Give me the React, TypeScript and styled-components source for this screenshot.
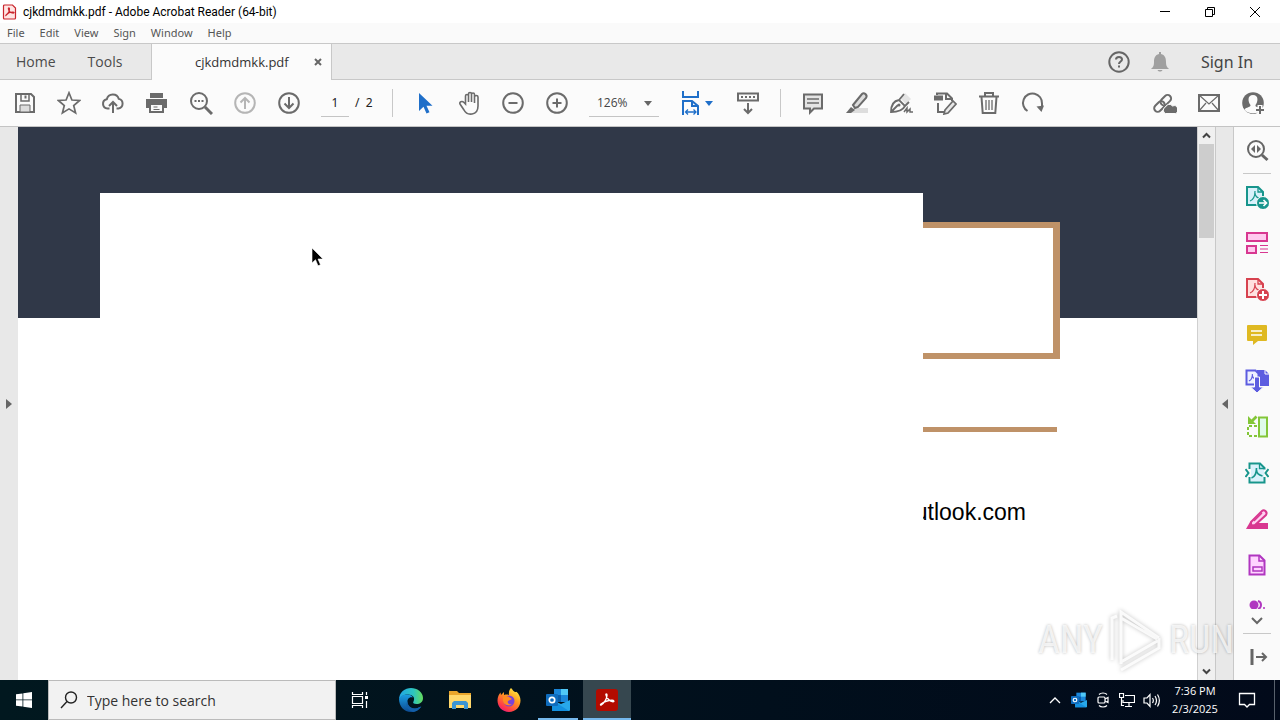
import React from 'react';
import styled, { createGlobalStyle } from 'styled-components';

const GlobalStyle = createGlobalStyle`
  * { box-sizing: border-box; }
  body { margin: 0; background: #fff; font-family: "Open Sans", "Noto Sans", sans-serif; }
  button, input, select { font: inherit; color: inherit; border: 0; background: none; padding: 0; margin: 0; outline: none; }
  svg { display: block; flex: none; }
`;

const Desktop = styled.div`
  display: flex;
  flex-direction: column;
  height: 100vh;
  overflow: hidden;
`;

/* Window chrome */
const TitleBar = styled.header`
  display: flex;
  align-items: center;
  height: 23px;
  padding: 0 3px 0 2px;
  background: #fff;
  color: #000;
`;
const WindowTitle = styled.h1`
  flex: 1;
  margin: 0 0 0 5px;
  font: 400 12px/16px Roboto, sans-serif;
`;
const CaptionButton = styled.button`
  display: flex;
  align-items: center;
  justify-content: center;
  width: 45px;
  height: 22px;
`;
const MenuBar = styled.nav`
  display: flex;
  gap: 15px;
  height: 20px;
  padding: 0 7px;
  background: #fafafa;
  color: #555;
  font: 11px/20px "Noto Sans", sans-serif;
`;
const MenuItem = styled.button`
  line-height: 20px;
`;
const TabBar = styled.div`
  display: flex;
  align-items: stretch;
  height: 37px;
  border-top: 1px solid #c8c8c8;
  border-bottom: 1px solid #c8c8c8;
  background: #e9e9e9;
  color: #4b4b4b;
  font-size: 14px;
`;
const NavTabs = styled.nav`
  display: flex;
  gap: 32px;
  width: 151px;
  padding-left: 16px;
`;
const NavTab = styled.button`
  height: 35px;
`;
const FileTab = styled.div`
  display: flex;
  align-items: center;
  width: 181px;
  margin-bottom: -1px;
  padding-left: 43px;
  border: solid #c8c8c8;
  border-width: 0 1px;
  background: #fbfbfb;
  font-size: 13px;
  color: #333;
`;
const FileTabName = styled.button`
  flex: 1;
  text-align: left;
`;
const CloseTab = styled.button`
  width: 26px;
  height: 26px;
  display: flex;
  align-items: center;
  justify-content: center;
`;
const TabActions = styled.div`
  display: flex;
  align-items: center;
  margin-left: auto;
  padding-right: 26px;
`;
const TabAction = styled.button`
  display: flex;
  justify-content: center;
  width: 41px;
`;
const SignIn = styled.button`
  min-width: 54px;
  margin-left: 20px;
  font: 16px/24px "Noto Sans", sans-serif;
  color: #444;
`;

/* Toolbar */
const ToolBar = styled.div`
  display: flex;
  align-items: center;
  height: 47px;
  padding: 0 5px 0 3px;
  border-bottom: 1px solid #c4c4c4;
  background: #fbfbfb;
  color: #6b6b6b;
`;
const ToolButton = styled.button<{ $tone?: string }>`
  display: flex;
  align-items: center;
  justify-content: center;
  width: 44px;
  height: 44px;
  color: ${p => p.$tone || '#6b6b6b'};
`;
const ToolGroup = styled.div<{ $end?: boolean }>`
  display: flex;
  margin-left: ${p => (p.$end ? 'auto' : 0)};
`;
const ToolRule = styled.div`
  width: 1px;
  height: 28px;
  margin: 0 10px;
  background: #c8c8c8;
`;
const PageField = styled.label`
  display: flex;
  align-items: center;
  gap: 6px;
  width: 71px;
  padding-left: 10px;
  font: 12px/16px "Noto Sans", sans-serif;
  color: #222;
  white-space: nowrap;
`;
const PageInput = styled.input`
  width: 28px;
  height: 28px;
  border-bottom: 1px solid #c4c4c4;
  text-align: center;
`;
const ZoomField = styled.label`
  position: relative;
  width: 70px;
  margin: 0 17px 0 10px;
  border-bottom: 1px solid #c4c4c4;
  font-size: 12px;
  color: #444;
`;
const ZoomSelect = styled.select`
  appearance: none;
  display: block;
  width: 100%;
  height: 27px;
  padding-left: 8px;
`;
const ZoomArrow = styled.svg`
  position: absolute;
  right: 7px;
  top: 12px;
  pointer-events: none;
`;
const FitButton = styled(ToolButton)`
  justify-content: flex-start;
  width: 50px;
  padding-left: 3px;
  gap: 2px;
`;

/* Work area */
const WorkArea = styled.main`
  position: relative;
  display: flex;
  flex: 1;
  min-height: 0;
`;
const PaneToggle = styled.button<{ $right?: boolean }>`
  display: flex;
  align-items: center;
  justify-content: center;
  flex: none;
  width: ${p => (p.$right ? 19 : 18)}px;
  background: #e8e8e8;
  border: solid #c8c8c8;
  border-width: ${p => (p.$right ? '0 1px' : '0')};
`;
const DocumentView = styled.section`
  position: relative;
  flex: 1;
  overflow: hidden;
  background: #fff;
`;
const HeaderBand = styled.div`
  display: flex;
  justify-content: flex-end;
  height: 191px;
  padding: 95px 137px 0 0;
  background: #303848;
`;
const TanFrame = styled.div`
  flex: none;
  width: 720px;
  height: 137px;
  border: 6px solid #bf9268;
  border-right-width: 7px;
  background: #fff;
`;
const TanRule = styled.div`
  height: 5px;
  margin: 109px 140px 0 300px;
  background: #bf9268;
`;
const ContactLine = styled.p`
  margin: 66px 171px 0 0;
  font: 23px/28px "Liberation Sans", Arial, sans-serif;
  text-align: right;
  color: #000;
`;
const BlankPanel = styled.div`
  position: absolute;
  left: 82px;
  right: 274px;
  top: 66px;
  bottom: 0;
  background: #fff;
`;
const Pointer = styled.svg`
  position: absolute;
  left: 293px;
  top: 120px;
`;
const ScrollTrack = styled.div`
  display: flex;
  flex-direction: column;
  align-items: center;
  flex: none;
  width: 18px;
  border-left: 1px solid #d0d0d0;
  background: #f0f0f0;
`;
const ScrollButton = styled.button`
  display: flex;
  align-items: center;
  justify-content: center;
  width: 17px;
  height: 17px;
`;
const ScrollThumb = styled.div`
  width: 15px;
  height: 94px;
  margin-bottom: auto;
  background: #cdcdcd;
`;
const ToolPane = styled.aside`
  display: flex;
  flex-direction: column;
  align-items: center;
  flex: none;
  width: 46px;
  background: #fafafa;
`;
const PaneButton = styled.button`
  display: flex;
  align-items: center;
  justify-content: center;
  flex: none;
  width: 46px;
  height: 46px;
`;
const PaneRule = styled.div`
  flex: none;
  width: 28px;
  height: 1px;
  background: #c8c8c8;
`;
const ClippedButton = styled.button`
  display: flex;
  align-items: flex-end;
  flex: none;
  height: 21px;
`;
const MoreButton = styled.button`
  display: flex;
  align-items: center;
  justify-content: center;
  flex: none;
  width: 46px;
  height: 24px;
`;
const Watermark = styled.div`
  position: absolute;
  right: 46px;
  bottom: 8px;
  display: flex;
  align-items: center;
  gap: 5px;
  font: 38px/60px "Roboto Condensed", "Liberation Sans Narrow", sans-serif;
  color: rgba(255, 255, 255, 0.75);
  text-shadow: 0 0 3px rgba(0, 0, 0, 0.28);
  pointer-events: none;
`;
const PlayMark = styled.svg`
  filter: drop-shadow(0 0 2px rgba(0, 0, 0, 0.28));
`;

/* Taskbar */
const TaskBar = styled.footer`
  display: flex;
  flex: none;
  height: 40px;
  background: linear-gradient(90deg, #01181f, #010f1c 60%, #020a1a);
  color: #fff;
`;
const TaskButton = styled.button<{ $open?: boolean; $active?: boolean }>`
  display: flex;
  align-items: center;
  justify-content: center;
  position: relative;
  width: 48px;
  height: 40px;
  background: ${p => (p.$active ? '#36474f' : 'transparent')};
  &::after {
    content: "";
    display: ${p => (p.$open ? 'block' : 'none')};
    position: absolute;
    bottom: 0;
    left: ${p => (p.$active ? 0 : 4)}px;
    right: ${p => (p.$active ? 0 : 4)}px;
    height: 2px;
    background: #76b9ed;
  }
`;
const AppButtons = styled.div`
  display: flex;
  gap: 1px;
  margin-left: 3px;
`;
const SearchBox = styled.label`
  display: flex;
  align-items: center;
  gap: 9px;
  width: 288px;
  padding-left: 11px;
  border: 1px solid #bbb;
  background: #f2f2f2;
  color: #222;
`;
const SearchInput = styled.input`
  flex: 1;
  min-width: 0;
  height: 36px;
  font-size: 14px;
  &::placeholder { color: #333; opacity: 1; }
`;
const Tray = styled.div`
  display: flex;
  align-items: center;
  margin-left: auto;
`;
const TrayButton = styled.button`
  display: flex;
  align-items: center;
  justify-content: center;
  width: 24px;
  height: 40px;
`;
const Clock = styled.time`
  width: 64px;
  font-size: 11px;
  line-height: 18px;
  text-align: center;
  white-space: nowrap;
`;
const NoticeButton = styled(TrayButton)`
  width: 40px;
`;
const ShowDesktop = styled.button`
  width: 5px;
  height: 40px;
  margin-left: 8px;
  box-shadow: -1px 0 0 #59616c;
`;

type IconProps = { children: React.ReactNode; size?: number; box?: string; weight?: number; color?: string };
const Icon = ({ children, size = 24, box = '0 0 24 24', weight = 2, color = 'currentColor' }: IconProps) => (
  <svg width={size} height={size} viewBox={box} fill="none" stroke={color} strokeWidth={weight} aria-hidden="true">
    {children}
  </svg>
);

/* Looped Acrobat stroke for the window icon, and a lighter one for the PDF tools */
const ACROBAT = 'M7 17c2-1 5-5 5-9 0-2-2-2-1.500 0 .5 3 3 6 7 6 2 0 1.500-1.500-.5-1.500-4 0-8 2-10 4.500-.7 1 0 1 0 0z';
const PdfFigure = ({ transform, width = 1.2 }: { transform: string; width?: number }) => (
  <path d="M7 17c3-1 5-4 5-10M12 9c0 3 2 5 6 6" transform={transform} strokeWidth={width} />
);

const fileTools = [
  { label: 'Save', icon: <Icon><path d="M3 3h15l3 3v15H3z" /><path d="M8 3v7h8V3" strokeWidth="1.500" /><path d="M12.500 4.500v3" /><path d="M7 21v-7h10v7z" fill="#ddd" strokeWidth="1" /></Icon> },
  { label: 'Bookmark', icon: <Icon weight={1.7}><path d="M12 1.800l2.900 7.200 7.700.5-5.900 5 1.900 7.500-6.600-4.100-6.600 4.100 1.900-7.500-5.900-5 7.700-.5z" /></Icon> },
  { label: 'Upload', icon: <Icon><path d="M8.500 17.500H6.500a4.700 4.700 0 01-.7-9.300 6.200 6.200 0 0112-.3 4.900 4.900 0 01-.3 9.600h-2" /><path d="M12 22V11.500M8 15l4-4 4 4" /></Icon> },
  { label: 'Print', icon: <Icon><path d="M5 2h13v5H5zM1 8h21v9H1z" fill="currentColor" stroke="none" /><path d="M5 13h13v8H5z" fill="#fbfbfb" /><path d="M8.500 16h4M8.500 18.500h6" strokeWidth="1" /></Icon> },
  { label: 'Find', icon: <Icon><circle cx="10" cy="10" r="8" /><path d="M16 16l7 7" strokeWidth="3" /><path d="M5.500 10h9" strokeDasharray="2 1.500" /></Icon> },
];

const markupTools = [
  { label: 'Comment', icon: <Icon><path d="M3 3.500h18v14h-8l-4 4v-4H3z" fill="#e4e4e4" /><path d="M6 8h12M6 12h12" strokeWidth="1.500" /></Icon> },
  { label: 'Highlight', icon: <Icon><path d="M9 17h14v5H5z" fill="#ddd" stroke="none" /><path d="M8 14l9-11c2-2 6 1 4 4l-8 9-3 1z" fill="#ddd" /><path d="M6 16l4 3-4 3H1z" fill="currentColor" stroke="none" /></Icon> },
  { label: 'Sign', icon: <Icon weight={1.8}><path d="M11 7l5-5 6 6-5 5z" fill="#e4e4e4" stroke="none" /><path d="M2 21c0-6 2-11 8-12l6 6c-2 4-8 6-14 6zM2 21l7-7M10 9l5-6M16 15l4-4" /><circle cx="10" cy="14" r="1.500" fill="currentColor" stroke="none" /><path d="M15 21l3-4v4l3-3v3h3" strokeWidth="1.500" /></Icon> },
  { label: 'Edit page', icon: <Icon><path d="M1 4.500h9v5H1z" fill="currentColor" stroke="none" /><path d="M4 4V2.500h10l5 5V10M13 2.500V8h6M5 12v9h6" /><path d="M12 19l8-9 3 3-8 9-4 1z" fill="#e8e8e8" strokeWidth="1.700" /></Icon> },
  { label: 'Delete', icon: <Icon><path d="M2 5.500h20M8 5V2h8v3M4.500 6l1.200 16h12.600l1.200-16" /><path d="M9 9v10M12 9v10M15 9v10" strokeWidth="1.300" /></Icon> },
  { label: 'Rotate', icon: <Icon><path d="M6.500 20A9.500 9.500 0 1121 12.500V17" /><path d="M15.500 15.500l7.500-1-2.500 6.500z" fill="currentColor" stroke="none" /></Icon> },
];

const shareTools = [
  { label: 'Share link', icon: <Icon><g transform="rotate(-45 10 12)"><rect x="-1" y="8.500" width="12" height="7" rx="3.500" /><rect x="8" y="8.500" width="12" height="7" rx="3.500" /></g><path d="M12.500 22.500a3.500 3.500 0 010-6.500 4 4 0 017-1 3.800 3.800 0 013 7.500z" fill="currentColor" stroke="#fbfbfb" strokeWidth="1" /></Icon> },
  { label: 'Send email', icon: <Icon><path d="M2 4h20v16H2z" /><path d="M2 4l10 9 10-9M2 20l7-8M22 20l-7-8" strokeWidth="1.200" /></Icon> },
  { label: 'Profile', icon: (
    <Icon>
      <circle cx="12" cy="12" r="10.800" fill="currentColor" stroke="none" />
      <path d="M12 4c-6 0-5 7-2.500 10 .5 2.500-4.500 2-6 4.500C5 21 8 22.200 12 22.200s6-1 7-2.200l1-2c-2-2-6-1.500-5.500-4C17 11 18 4 12 4z" fill="#fbfbfb" stroke="none" />
      <path d="M14 19h10M19 14v10" stroke="#fbfbfb" strokeWidth="5" />
      <path d="M15 19h8M19 15v8" />
    </Icon>
  ) },
];

const PageGlyph = ({ fill }: { fill: string }) => (
  <>
    <path d="M2 2h11l5 5v13H2z" fill={fill} />
    <path d="M13 2v5h5" strokeWidth="1.300" />
    <PdfFigure transform="translate(-2 -1)" />
  </>
);

const paneTools = [
  { label: 'Export PDF', icon: <Icon color="#17958c"><PageGlyph fill="#d9f1fb" /><circle cx="18" cy="18" r="6.500" fill="#17958c" stroke="#fafafa" strokeWidth="1" /><path d="M14 18h7M18.500 15l3 3-3 3" stroke="#fff" strokeWidth="1.600" /></Icon> },
  { label: 'Organize pages', icon: <Icon color="#d83790"><path d="M2 2h20v8H2zM2 15h9v7H2z" fill="#ffc9ee" /><path d="M15 14.500h8M15 18h8M15 21.500h8" strokeWidth="1.200" /></Icon> },
  { label: 'Create PDF', icon: <Icon color="#d7424f"><PageGlyph fill="#ffe1df" /><circle cx="18" cy="18" r="6.500" fill="#d7424f" stroke="#fafafa" strokeWidth="1" /><path d="M14 18h8M18 14v8" stroke="#fff" /></Icon> },
  { label: 'Comment', icon: <Icon color="#dfb922"><path d="M3 2h18a1 1 0 011 1v14a1 1 0 01-1 1h-8l-5 4v-4H3a1 1 0 01-1-1V3a1 1 0 011-1z" fill="#dfb922" stroke="none" /><path d="M6 8h11M6 12h11" stroke="#fff" strokeWidth="1.500" /></Icon> },
  { label: 'Combine files', icon: <Icon color="#5c5ce0"><path d="M12 1h8l4 4v12H12z" fill="#5c5ce0" stroke="none" /><path d="M20 1v4h4" stroke="#fff" strokeWidth="1" /><path d="M1.500 1.500h9l3 3v11h-12z" fill="#edf0ff" /><PdfFigure transform="translate(-1 0) scale(.7)" width={1.6} /><path d="M9.500 8h5v10h4L12 24l-6.500-6h4z" fill="#5c5ce0" stroke="#fafafa" strokeWidth="1" /></Icon> },
  { label: 'Crop pages', icon: <Icon color="#83c638"><path d="M14 2.500h8v19h-8z" fill="#dffbe9" /><path d="M12 21H3V11H12" strokeDasharray="3 2" /><path d="M3 1v8h8L8.500 6.500l4-4-2-2-4 4z" fill="#83c638" stroke="none" /></Icon> },
  { label: 'Compress PDF', icon: <Icon color="#17958c"><path d="M6 3.500h9l4 4v13H6z" fill="#d9f1fb" stroke="none" /><path d="M4.500 8V2.500H15L19.500 7v1.500M4.500 16v5.500h15V16" /><path d="M14.500 3v4.500h4.500" strokeWidth="1.300" /><PdfFigure transform="translate(-.5 0)" width={1.7} /><path d="M.5 8l3 4-3 4M23.500 8l-3 4 3 4" /></Icon> },
  { label: 'Redact', icon: <Icon color="#d83790"><path d="M12 16h11v6H1z" fill="#d83790" stroke="none" /><path d="M6 15L17 4c2-2 6 1 4 4L10 18l-4 1z" fill="#ffd0f0" /><path d="M9 14l8-8" strokeWidth="1.200" /><path d="M5 15l5 5-9 2z" fill="#d83790" stroke="none" /></Icon> },
  { label: 'Prepare form', icon: <Icon color="#b036c0"><path d="M4.500 2.500h10l5 5v14h-15z" fill="#ffd4ff" /><path d="M14 3v5h5" strokeWidth="1.500" /><path d="M8 14h9v4H8z" strokeWidth="1.500" /></Icon> },
];

const AcrobatTile = () => (
  <svg width="22" height="22" viewBox="0 0 22 22" aria-hidden="true">
    <rect width="22" height="22" rx="3" fill="#b30b00" />
    <path d="M5 16c3-1.500 6-6 6-10 0-1.500-1.500-1.500-1 0 .5 3.500 4 6.500 7 6.800 1.500 0 1-1.500-1-1.500-4 0-8 1.500-11 3.700-.8.900-.5 1.200 0 1z" fill="none" stroke="#fff" strokeWidth="1.400" />
  </svg>
);

const OutlookTile = ({ size }: { size: number }) => (
  <svg width={size} height={size} viewBox="0 0 24 24" aria-hidden="true">
    <path d="M8 1h14v13H8z" fill="#1a86d9" /><path d="M15 1h7v6h-7z" fill="#50c8f5" /><path d="M8 7h7v7H8z" fill="#0a5ca8" />
    <path d="M6 12l9 4 9-4v10a1 1 0 01-1 1H7a1 1 0 01-1-1z" fill="#28a8ea" /><path d="M6 12l17 11H7a1 1 0 01-1-1z" fill="#1490df" />
    <rect y="6" width="12" height="12" rx="1" fill="#0f6cbd" /><circle cx="6" cy="12" r="2.700" fill="none" stroke="#fff" strokeWidth="1.700" />
  </svg>
);

const EdgeMark = () => (
  <svg width="26" height="26" viewBox="0 0 26 26" aria-hidden="true">
    <defs>
      <linearGradient id="edgeTop"><stop stopColor="#21a5e5" /><stop offset=".6" stopColor="#2dc5c0" /><stop offset="1" stopColor="#65dc5c" /></linearGradient>
      <linearGradient id="edgeLow" x2="0" y2="1"><stop stopColor="#1b9de2" /><stop offset="1" stopColor="#0c4a91" /></linearGradient>
    </defs>
    <path d="M1 13C1 5 7 1 13 1s12 4 12 10c0 4-3 6-6.500 6-3 0-4-1-3-2.500 2-4-1-7-5.500-7-4 0-8 2-9 5.500z" fill="url(#edgeTop)" />
    <path d="M1 12c1-3 4-4.500 8-4.500 3 0 5 1 6 3-4-1-6 2-5.500 5 .5 4 5 7 10 5.500 2-.7 3.500-2 3.800-1.500C21 23 17 25 13 25 6 25 1 19 1 12z" fill="url(#edgeLow)" />
    <path d="M9.500 14c-.5 5 4 8.500 9.500 7.300 2-.5 3.500-1.800 4.200-1.500-2 3.200-5 4.800-8.200 5.200C9 23 7 18 9.500 14z" fill="#135fa9" />
  </svg>
);

const FolderMark = () => (
  <svg width="22" height="20" viewBox="0 0 22 20" aria-hidden="true">
    <path d="M0 1h8l2 2h12v15H0z" fill="#e9a52b" /><path d="M0 5h22v13H0z" fill="#ffd76b" />
    <path d="M3 19v-6l2-2h12l2 2v6h-4v-4H7v4z" fill="#3b94d2" />
  </svg>
);

const FirefoxMark = () => (
  <svg width="24" height="24" viewBox="0 0 24 24" aria-hidden="true">
    <defs><linearGradient id="fox" x1=".8" y1="0" x2=".2" y2="1"><stop stopColor="#fff04a" /><stop offset=".4" stopColor="#ff9a1e" /><stop offset=".8" stopColor="#ff3b47" /><stop offset="1" stopColor="#e31587" /></linearGradient></defs>
    <path d="M14 0c2 2 2 3 4 4 1 0 1.500-.3 1.500-.3C22 6 23.500 9 23.500 12.500 23.500 19 18.500 24 12 24S.5 19 .5 12.500C.5 9 2 6 3.500 4.500L4 7l3-3v3c3-1 5 0 5 0-.5-3 .5-5.500 2-7z" fill="url(#fox)" />
    <circle cx="12" cy="13" r="5.500" fill="#7a42d8" /><path d="M6 9c3-2 6 0 6 0l3 2c-1 1-3 1-4 2-1 2 1 4 4 3-2 2-8 2-9-3z" fill="#ff8b20" />
  </svg>
);

export default function App() {
  return (
    <Desktop>
      <GlobalStyle />
      <TitleBar>
        <svg width="16" height="16" viewBox="0 0 16 16" aria-hidden="true">
          <path d="M2.500 1h8l3 3v10a1 1 0 01-1 1h-10a1 1 0 01-1-1V2a1 1 0 011-1z" fill="#ffe5e3" stroke="#c9252d" strokeWidth="1.200" />
          <path d={ACROBAT} transform="translate(-.7 -.5) scale(.68)" fill="none" stroke="#c9252d" strokeWidth="1.800" />
        </svg>
        <WindowTitle>cjkdmdmkk.pdf - Adobe Acrobat Reader (64-bit)</WindowTitle>
        <CaptionButton aria-label="Minimize"><Icon size={12} box="0 0 12 12" weight={1} color="#000"><path d="M1 5.500h10" /></Icon></CaptionButton>
        <CaptionButton aria-label="Restore"><Icon size={12} box="0 0 12 12" weight={1} color="#000"><path d="M1.500 3.500h7v7h-7zM3.500 3.500v-2h7v7h-2" /></Icon></CaptionButton>
        <CaptionButton aria-label="Close"><Icon size={12} box="0 0 12 12" weight={1} color="#000"><path d="M1 1l10 10M11 1L1 11" /></Icon></CaptionButton>
      </TitleBar>
      <MenuBar>
        {['File', 'Edit', 'View', 'Sign', 'Window', 'Help'].map(item => <MenuItem key={item}>{item}</MenuItem>)}
      </MenuBar>
      <TabBar>
        <NavTabs>
          <NavTab>Home</NavTab>
          <NavTab>Tools</NavTab>
        </NavTabs>
        <FileTab>
          <FileTabName>cjkdmdmkk.pdf</FileTabName>
          <CloseTab aria-label="Close tab"><Icon size={8} box="0 0 8 8" color="#666"><path d="M1 1l6 6M7 1L1 7" /></Icon></CloseTab>
        </FileTab>
        <TabActions>
          <TabAction aria-label="Help"><Icon color="#666"><circle cx="12" cy="12" r="9.700" /><path d="M9 9.500c0-3.500 6-3.500 6 0 0 2-3 2-3 4.500M12 15.500v2" /></Icon></TabAction>
          <TabAction aria-label="Notifications"><Icon color="#a0a0a0"><path d="M11 2h2v2c4 1 5 4 5 8 0 4 1 5 3 7H3c2-2 3-3 3-7 0-4 1-7 5-8zM9.500 20h5c-1 2-4 2-5 0z" fill="#a0a0a0" stroke="none" /></Icon></TabAction>
          <SignIn>Sign In</SignIn>
        </TabActions>
      </TabBar>
      <ToolBar>
        <ToolGroup>
          {fileTools.map(t => <ToolButton key={t.label} aria-label={t.label}>{t.icon}</ToolButton>)}
          <ToolButton aria-label="Previous page" $tone="#b5b5b5"><Icon><circle cx="12" cy="12" r="9.800" /><path d="M12 18V7M7.500 11.500L12 7l4.500 4.500" /></Icon></ToolButton>
          <ToolButton aria-label="Next page"><Icon><circle cx="12" cy="12" r="9.800" /><path d="M12 6v11M7.500 12.500L12 17l4.500-4.500" /></Icon></ToolButton>
        </ToolGroup>
        <PageField><PageInput aria-label="Page number" defaultValue="1" />/&nbsp; 2</PageField>
        <ToolRule />
        <ToolGroup>
          <ToolButton aria-label="Select" $tone="#1f6fc9"><Icon><path d="M6 2v18l4.500-4.300 3 6.800 3-1.300-3-6.500h6z" fill="currentColor" stroke="none" /></Icon></ToolButton>
          <ToolButton aria-label="Pan"><Icon weight={1.6}><path d="M7 13V5c0-2 3-2 3 0v6V3c0-2 3-2 3 0v8V3.500c0-2 3-2 3 0V12 6c0-2 3.500-2 3.500 0v9c0 10-11 10-14 4l-4-6c-1-2 2-3.500 4-1.500z" transform="translate(1.500 0)" /></Icon></ToolButton>
          <ToolButton aria-label="Zoom out"><Icon><circle cx="12" cy="12" r="9.800" /><path d="M7.500 12h9" /></Icon></ToolButton>
          <ToolButton aria-label="Zoom in"><Icon><circle cx="12" cy="12" r="9.800" /><path d="M7.500 12h9M12 7.500v9" /></Icon></ToolButton>
        </ToolGroup>
        <ZoomField>
          <ZoomSelect aria-label="Zoom level"><option>126%</option></ZoomSelect>
          <ZoomArrow width="8" height="5" viewBox="0 0 8 5"><path d="M0 0h8L4 5z" fill="#666" /></ZoomArrow>
        </ZoomField>
        <FitButton aria-label="Fit width" $tone="#1f6fc9">
          <Icon><path d="M4 0v6h15V0M4 24V10h9l6 5v9M13 10v5h6" /><path d="M7 21h10M9 18.500L6.500 21 9 23.500M14.500 18.500L17 21l-2.500 2.500" strokeWidth="1.300" /></Icon>
          <svg width="8" height="5" viewBox="0 0 8 5"><path d="M0 0h8L4 5z" fill="#1f6fc9" /></svg>
        </FitButton>
        <ToolButton aria-label="Scroll mode"><Icon><path d="M2 2.500h20v7H2z" /><path d="M5 6h14" strokeDasharray="2 2" /><path d="M12 12v10M8 18l4 4 4-4" /></Icon></ToolButton>
        <ToolRule />
        <ToolGroup>
          {markupTools.map(t => <ToolButton key={t.label} aria-label={t.label}>{t.icon}</ToolButton>)}
        </ToolGroup>
        <ToolGroup $end>
          {shareTools.map(t => <ToolButton key={t.label} aria-label={t.label}>{t.icon}</ToolButton>)}
        </ToolGroup>
      </ToolBar>
      <WorkArea>
        <PaneToggle aria-label="Open navigation pane"><svg width="6" height="10" viewBox="0 0 6 10"><path d="M0 0v10l6-5z" fill="#666" /></svg></PaneToggle>
        <DocumentView>
          <HeaderBand><TanFrame /></HeaderBand>
          <TanRule />
          <ContactLine>utlook.com</ContactLine>
          <BlankPanel />
          <Pointer width="12" height="20" viewBox="0 0 12 20"><path d="M1 1v15l3.500-3.300 2.500 6 2.500-1-2.500-5.700h5z" fill="#000" stroke="#fff" strokeWidth=".6" /></Pointer>
        </DocumentView>
        <ScrollTrack>
          <ScrollButton aria-label="Scroll up"><Icon size={9} box="0 0 9 9" color="#444"><path d="M1 6.500L4.500 3 8 6.500" /></Icon></ScrollButton>
          <ScrollThumb />
          <ScrollButton aria-label="Scroll down"><Icon size={9} box="0 0 9 9" color="#444"><path d="M1 2.500L4.500 6 8 2.500" /></Icon></ScrollButton>
        </ScrollTrack>
        <PaneToggle $right aria-label="Close tools pane"><svg width="6" height="10" viewBox="0 0 6 10"><path d="M6 0v10L0 5z" fill="#666" /></svg></PaneToggle>
        <ToolPane>
          <PaneButton aria-label="Search tools"><Icon color="#666"><circle cx="11" cy="11" r="8" /><path d="M17 17l5.500 5" strokeWidth="3" /><path d="M10 7v8l-4-4zM12 7v8l4-4z" fill="#666" stroke="none" /></Icon></PaneButton>
          <PaneRule />
          {paneTools.map(t => <PaneButton key={t.label} aria-label={t.label}>{t.icon}</PaneButton>)}
          <ClippedButton aria-label="More tools"><svg width="16" height="9" viewBox="0 0 16 9"><circle cx="5" cy="5" r="4.500" fill="#b036c0" /><path d="M9 1c4 1 4 7 0 8" fill="none" stroke="#b036c0" strokeWidth="2" /><circle cx="15" cy="8" r="1" fill="#b036c0" /></svg></ClippedButton>
          <MoreButton aria-label="Show more tools"><Icon size={12} box="0 0 12 12" color="#666"><path d="M1 3l5 5 5-5" /></Icon></MoreButton>
          <PaneRule />
          <PaneButton aria-label="Collapse pane"><Icon color="#666"><path d="M7 4v16" strokeWidth="3" /><path d="M11 12h9M17 8l4 4-4 4" /></Icon></PaneButton>
        </ToolPane>
        <Watermark>
          ANY
          <PlayMark width="56" height="64" viewBox="0 0 56 64" fill="none" stroke="#fff" strokeOpacity=".85" strokeWidth="3"><path d="M4 52V10l5-2M13 56V4l38 26M13 10l36 21M13 62l38-22v-8L13 54" /></PlayMark>
          RUN
        </Watermark>
      </WorkArea>
      <TaskBar>
        <TaskButton aria-label="Start"><svg width="16" height="16" viewBox="0 0 16 16"><path d="M0 2.300l6.500-.9v6.100H0zM7.300 1.200L16 0v7.500H7.300zM0 8.300h6.500v6.200L0 13.700zM7.300 8.300H16V16l-8.700-1.300z" fill="#fff" /></svg></TaskButton>
        <SearchBox>
          <Icon size={18} box="0 0 18 18" weight={1.4}><circle cx="11" cy="6.500" r="5.500" /><path d="M7 10.500L1 17" /></Icon>
          <SearchInput aria-label="Search" placeholder="Type here to search" />
        </SearchBox>
        <TaskButton aria-label="Task view"><Icon size={18} box="0 0 18 18" weight={1.2} color="#fff"><path d="M1.500 5.500h10v7h-10zM1.500 1v2.500h10V1M1.500 17v-2.500h10V17M15.500 1v3M15.500 10v7" /><path d="M14 5h3v3h-3z" fill="#fff" stroke="none" /></Icon></TaskButton>
        <AppButtons>
          <TaskButton aria-label="Microsoft Edge"><EdgeMark /></TaskButton>
          <TaskButton aria-label="File Explorer"><FolderMark /></TaskButton>
          <TaskButton aria-label="Firefox"><FirefoxMark /></TaskButton>
          <TaskButton aria-label="Outlook" $open><OutlookTile size={24} /></TaskButton>
          <TaskButton aria-label="Adobe Acrobat" $open $active><AcrobatTile /></TaskButton>
        </AppButtons>
        <Tray>
          <TrayButton aria-label="Show hidden icons"><Icon size={12} box="0 0 12 12" weight={1.3} color="#fff"><path d="M1 9l5-5 5 5" /></Icon></TrayButton>
          <TrayButton aria-label="Outlook"><OutlookTile size={16} /></TrayButton>
          <TrayButton aria-label="Meet now"><Icon size={16} box="0 0 16 16" weight={1.2} color="#fff"><rect x="3" y="5" width="7" height="6" rx="1" /><path d="M10 7l3-1.500v5L10 9M4 2.500c2-2 6-2 8 0M4 13.500c2 2 6 2 8 0" /></Icon></TrayButton>
          <TrayButton aria-label="Network"><Icon size={16} box="0 0 16 16" weight={1.2} color="#fff"><path d="M6 3.500h9.500v7H4V8M10 11v3M6 14.500h7M.5 1.500h4v4h-4zM2.500 6v7.500H5" /></Icon></TrayButton>
          <TrayButton aria-label="Volume"><Icon size={17} box="0 0 17 17" weight={1.2} color="#fff"><path d="M1 6h3l3-3.500v12L4 11H1zM9.500 6c1 1.500 1 3.500 0 5M12 4c2 3 2 6 0 9M14.500 2.500c2.500 4 2.500 8 0 12" /></Icon></TrayButton>
          <Clock>7:36 PM<br />2/3/2025</Clock>
          <NoticeButton aria-label="Action center"><Icon size={18} box="0 0 18 18" weight={1.3} color="#fff"><path d="M1.500 2.500h15v11h-5L9 16l-2.500-2.500h-5z" /></Icon></NoticeButton>
          <ShowDesktop aria-label="Show desktop" />
        </Tray>
      </TaskBar>
    </Desktop>
  );
}
